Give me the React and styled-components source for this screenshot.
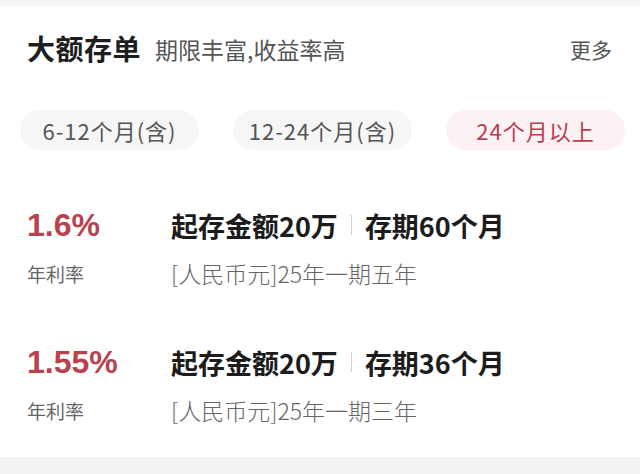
import React, { useState } from "react";
import styled, { createGlobalStyle } from "styled-components";

const GlobalStyle = createGlobalStyle`
  html, body {
    margin: 0;
    padding: 0;
    background: #f3f3f3;
  }
  body {
    font-family: "Noto Sans CJK SC", "Noto Sans", sans-serif;
  }
`;

const terms = ["6-12个月(含)", "12-24个月(含)", "24个月以上"];

const products = [
  { rate: "1.6%", amount: "起存金额20万", period: "存期60个月", desc: "[人民币元]25年一期五年" },
  { rate: "1.55%", amount: "起存金额20万", period: "存期36个月", desc: "[人民币元]25年一期三年" },
];

function App() {
  const [active, setActive] = useState(2);

  return (
    <>
      <GlobalStyle />
      <Page>
        <Card>
          <Header>
            <Title>大额存单</Title>
            <SubTitle>期限丰富,收益率高</SubTitle>
            <More>更多</More>
          </Header>
          <Tabs>
            {terms.map((t, i) => (
              <Chip key={t} active={i === active} onClick={() => setActive(i)}>
                {t}
              </Chip>
            ))}
          </Tabs>
          <List>
            {products.map((p, i) => (
              <Item key={i}>
                <Rate>{p.rate}</Rate>
                <MainLine>
                  {p.amount}
                  <Divider />
                  {p.period}
                </MainLine>
                <Label>年利率</Label>
                <Desc>{p.desc}</Desc>
              </Item>
            ))}
          </List>
        </Card>
      </Page>
    </>
  );
}

export default App;

const Page = styled.div`
  padding-top: 6px;
  min-height: 474px;
  box-sizing: border-box;
`;

const Card = styled.div`
  background: #fff;
  padding-bottom: 32px;
`;

const Header = styled.div`
  display: flex;
  align-items: center;
  height: 84px;
  padding: 0 28px 0 27px;
`;

const Title = styled.span`
  font-size: 28px;
  font-weight: 700;
  color: #1e1e1e;
  letter-spacing: 0.5px;
`;

const SubTitle = styled.span`
  margin-left: 14px;
  font-size: 23px;
  color: #555;
  margin-top: 2px;
`;

const More = styled.span`
  margin-left: auto;
  font-size: 21px;
  color: #555;
  margin-top: 2px;
`;

const Tabs = styled.div`
  display: grid;
  grid-template-columns: repeat(3, 179px);
  column-gap: 34px;
  padding: 20px 0 0 20px;
`;

const Chip = styled.button`
  height: 40px;
  border: none;
  border-radius: 20px;
  padding: 0;
  font-family: inherit;
  font-size: 22px;
  letter-spacing: 1px;
  cursor: pointer;
  background: ${(props) => (props.active ? "#fdf2f3" : "#f6f6f6")};
  color: ${(props) => (props.active ? "#b5404f" : "#555")};
`;

const List = styled.div`
  display: flex;
  flex-direction: column;
  gap: 54px;
  padding-top: 55px;
`;

const Item = styled.div`
  display: grid;
  grid-template-columns: 144px 1fr;
  grid-template-rows: 40px 30px;
  row-gap: 13px;
  padding-left: 27px;
  align-items: center;
`;

const Rate = styled.div`
  font-family: "Liberation Sans", Arial, sans-serif;
  font-size: 32px;
  font-weight: 700;
  color: #b8434f;
`;

const MainLine = styled.div`
  display: flex;
  align-items: center;
  font-size: 27px;
  font-weight: 700;
  color: #1c1c1c;
`;

const Divider = styled.span`
  display: inline-block;
  width: 1px;
  height: 20px;
  background: #d0d0d0;
  margin: 0 13px 0 13px;
`;

const Label = styled.div`
  font-size: 19px;
  color: #666;
`;

const Desc = styled.div`
  font-size: 23px;
  font-weight: 300;
  color: #666;
`;
